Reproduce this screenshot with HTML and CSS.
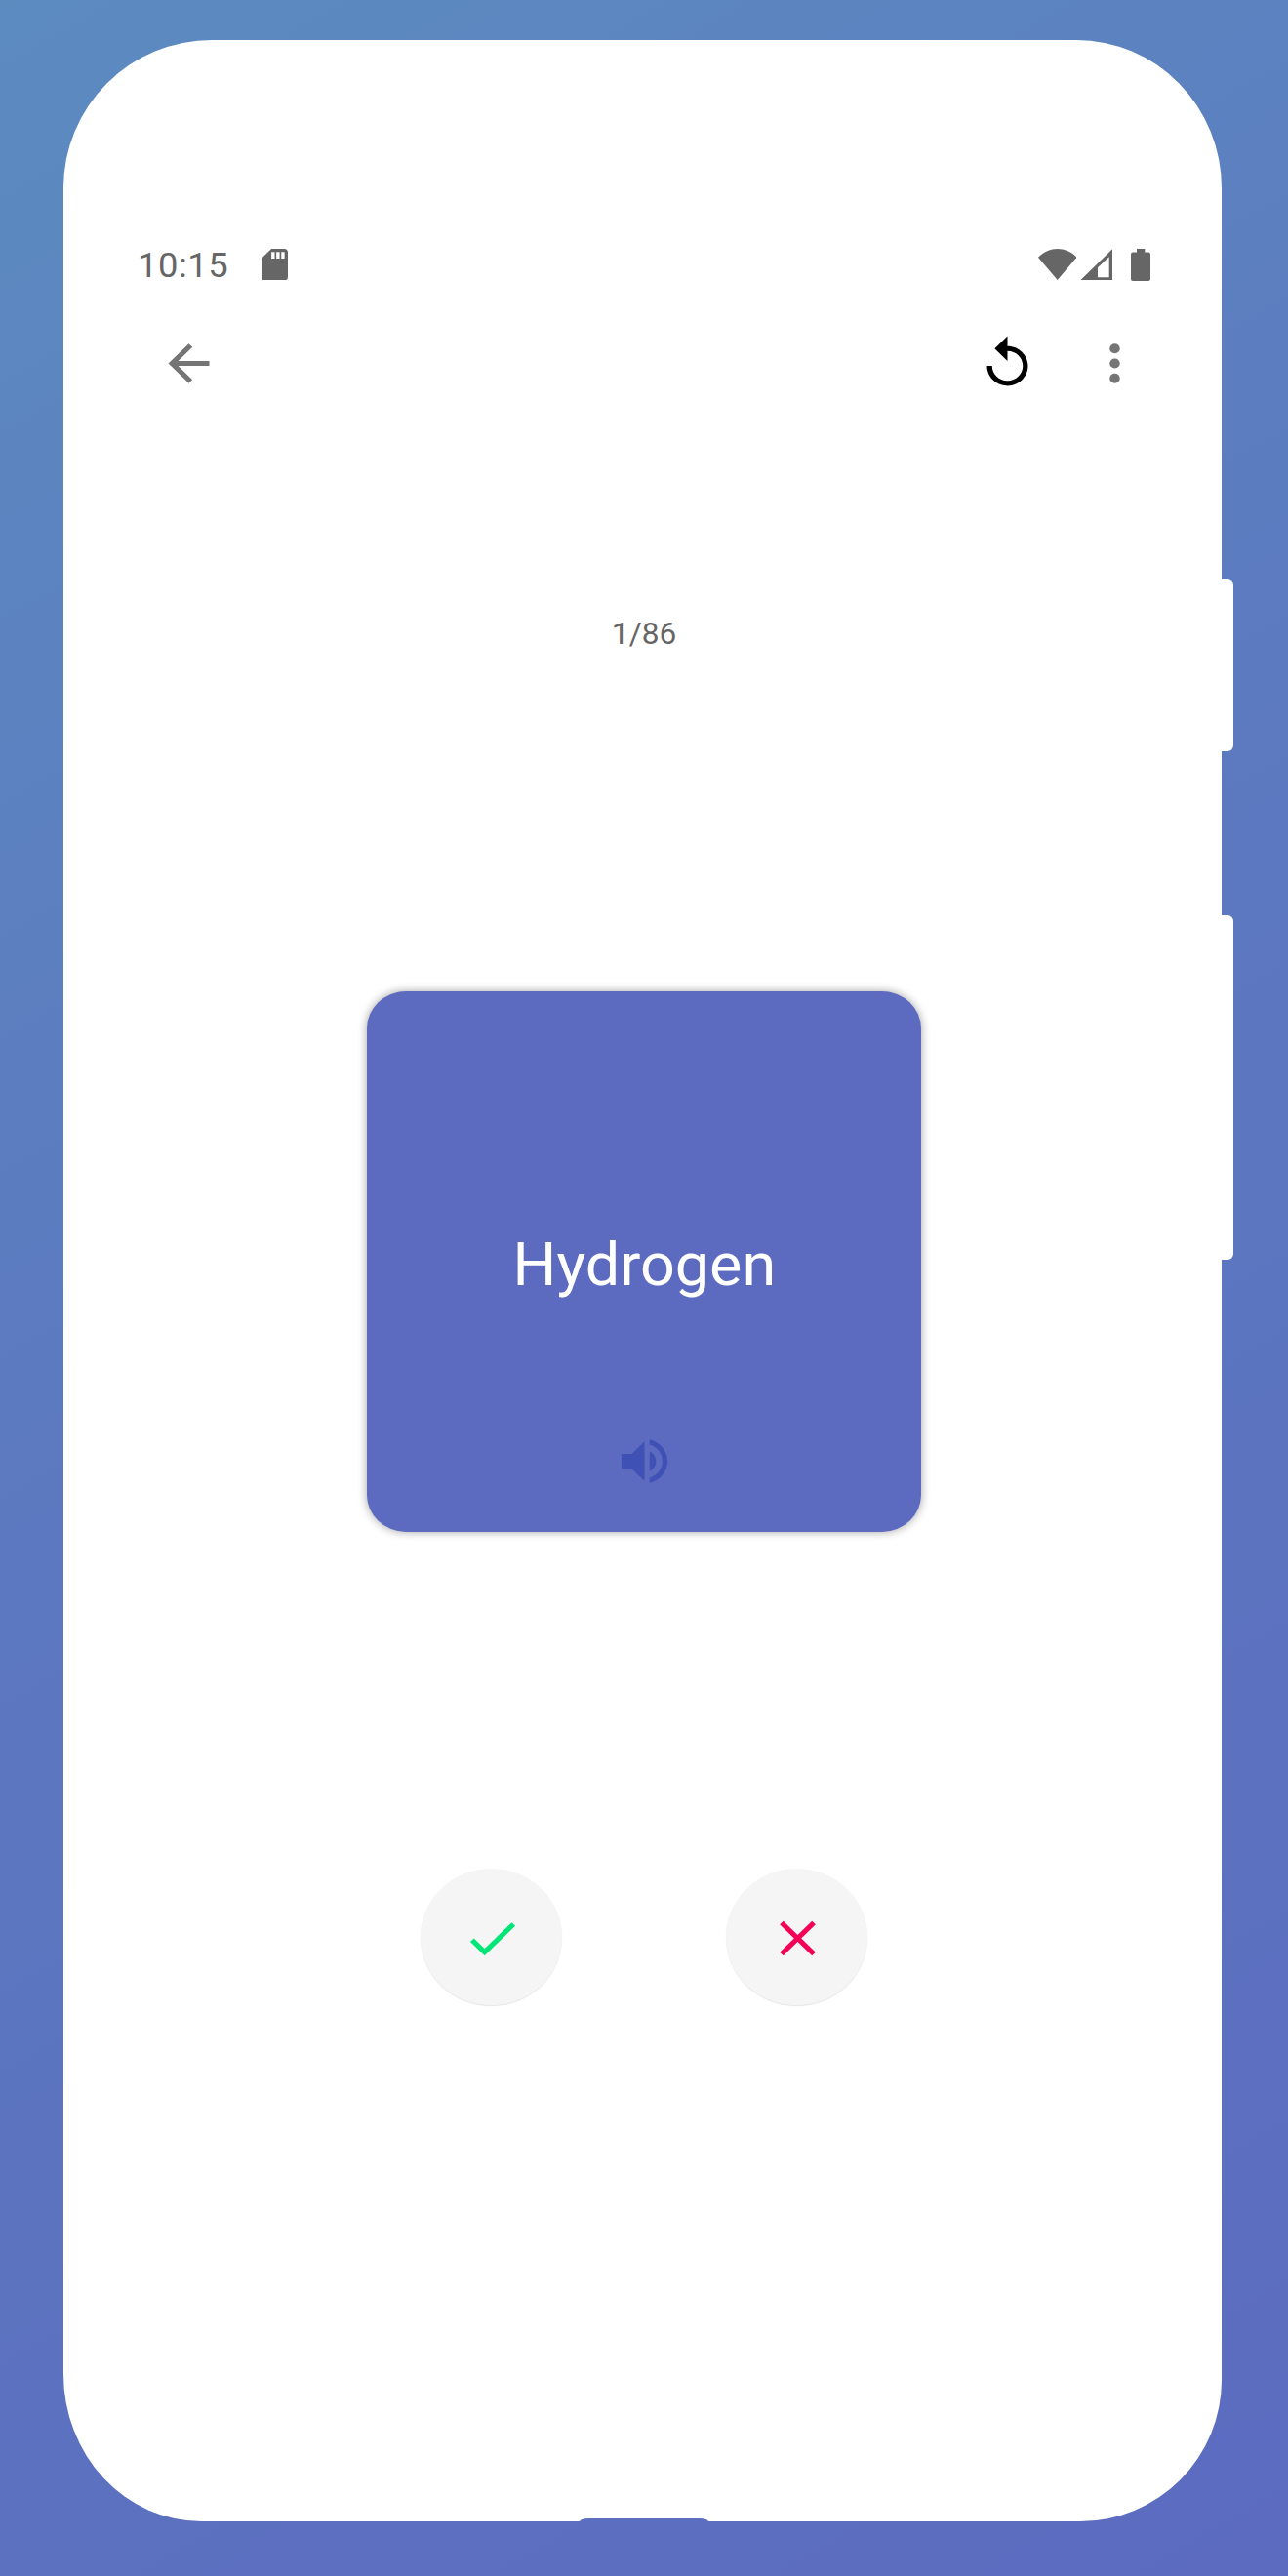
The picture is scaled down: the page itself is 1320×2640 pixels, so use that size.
FILE: index.html
```html
<!DOCTYPE html>
<html lang="en">
<head>
<meta charset="utf-8">
<title>Flashcards</title>
<link rel="stylesheet" href="styles.css">
</head>
<body>
<main class="phone">
  <span class="key key-power"></span>
  <span class="key key-volume"></span>

  <header class="status">
    <span class="clock">10:15</span>
    <svg class="sd" viewBox="4 2 16 20" preserveAspectRatio="none"><path fill-rule="evenodd" d="M18 2h-8L4 8v12c0 1.100.9 2 2 2h12c1.100 0 2-.9 2-2V4c0-1.100-.9-2-2-2zM12 8.200h-2V4h2zm3 0h-2V4h2zm3 0h-2V4h2z"/></svg>
    <span class="spacer"></span>
    <svg class="wifi" viewBox="0 0 39.500 32"><path d="M19.700 32L0 8.700C11-2.900 28.500-2.900 39.500 8.700z"/></svg>
    <svg class="signal" viewBox="0 0 33.300 32.500"><path fill-rule="evenodd" d="M33.300 0v32.500H0zM29.700 8.200L18 19.300V29.300h11.700z"/></svg>
    <svg class="battery" viewBox="0 0 20 33"><path d="M6 0h8.300v3.500H18a2 2 0 0 1 2 2V31a2 2 0 0 1-2 2H2a2 2 0 0 1-2-2V5.500a2 2 0 0 1 2-2h4z"/></svg>
  </header>

  <nav class="toolbar">
    <svg class="icon back" viewBox="0 0 24 24" preserveAspectRatio="none"><path d="M20 11H7.830l5.590-5.590L12 4l-8 8 8 8 1.410-1.410L7.830 13H20z"/></svg>
    <span class="spacer"></span>
    <svg class="icon replay" viewBox="0 0 24 24" preserveAspectRatio="none"><path d="M12 5V1L7 6l5 5V7c3.310 0 6 2.690 6 6s-2.690 6-6 6-6-2.690-6-6H4c0 4.420 3.580 8 8 8s8-3.580 8-8-3.580-8-8-8z"/></svg>
    <svg class="icon more" viewBox="0 0 24 24" preserveAspectRatio="none"><circle cx="12" cy="6" r="2"/><circle cx="12" cy="12" r="2"/><circle cx="12" cy="18" r="2"/></svg>
  </nav>

  <p class="progress">1/86</p>

  <section class="card">
    <h1 class="term">Hydrogen</h1>
    <svg class="icon speaker" viewBox="0 0 24 24" preserveAspectRatio="none"><path d="M3 9v6h4l5 5V4L7 9H3zm13.500 3c0-1.770-1.020-3.290-2.500-4.030v8.050c1.480-.73 2.500-2.250 2.500-4.020zM14 3.230v2.060c2.890.86 5 3.540 5 6.710s-2.110 5.850-5 6.710v2.060c4.010-.91 7-4.490 7-8.770s-2.990-7.860-7-8.770z"/></svg>
  </section>

  <div class="answers">
    <button class="answer right" aria-label="Correct"><svg class="icon" viewBox="0 0 24 24" preserveAspectRatio="none"><path d="M9 16.170L4.830 12l-1.420 1.410L9 19 21 7l-1.410-1.410z"/></svg></button>
    <button class="answer wrong" aria-label="Wrong"><svg class="icon" viewBox="0 0 24 24" preserveAspectRatio="none"><path d="M19 6.410L17.590 5 12 10.590 6.410 5 5 6.410 10.590 12 5 17.590 6.410 19 12 13.410 17.590 19 19 17.590 13.410 12z"/></svg></button>
  </div>
  <span class="chin"></span>
</main>
</body>
</html>
```

FILE: styles.css
```css
* {
  box-sizing: border-box;
}

body {
  margin: 0;
  width: 1320px;
  height: 2640px;
  padding: 41px 68px 56.5px 65px;
  background: linear-gradient(150deg, #5c8bc0 0%, #5c7ac0 42%, #5c6bc0 100%);
  font-family: Roboto, "Liberation Sans", sans-serif;
}

svg {
  display: block;
  flex: none;
}

.phone {
  position: relative;
  display: flex;
  flex-direction: column;
  height: 2542.5px;
  padding-top: 208px;
  background: #fff;
  border-radius: 152px 149px 145px 141px / 152px 152px 145px 151px;
}

.key {
  position: absolute;
  left: 100%;
  width: 12px;
  background: #fff;
  border-radius: 0 6px 6px 0;
}

.key-power {
  top: 552px;
  height: 177px;
}

.key-volume {
  top: 897px;
  height: 353px;
}

.chin {
  position: absolute;
  left: 529px;
  bottom: 0;
  width: 132px;
  height: 3px;
  background: #5c6fc0;
  border-radius: 9px 9px 0 0 / 3px 3px 0 0;
}

.spacer {
  flex: 1;
}

.status {
  display: flex;
  align-items: center;
  height: 44px;
  padding: 0 73px 0 76px;
  fill: #666;
}

.clock {
  width: 127px;
  padding-top: 1px;
  color: #666;
  font-size: 35.500px;
  line-height: 44px;
  letter-spacing: 0.500px;
  transform: scaleX(1.024);
  transform-origin: left;
}

.sd {
  width: 27px;
  height: 32.500px;
}

.wifi {
  width: 39.500px;
  height: 32px;
  margin-right: 3.500px;
}

.signal {
  width: 33.300px;
  height: 32.500px;
  margin-right: 19px;
}

.battery {
  width: 20px;
  height: 33px;
}

.icon {
  width: 63px;
  height: 61px;
}

.toolbar {
  display: flex;
  margin-top: 49.400px;
  padding: 0 78.200px 0 97.200px;
  fill: #757575;
}

.replay {
  margin-right: 47.300px;
  fill: #000;
}

.progress {
  margin: 226.600px 0 0;
  padding-left: 4px;
  color: #666;
  font-size: 31px;
  line-height: 40px;
  text-align: center;
  transform: translateX(-0.5px) scaleX(1.02);
}

.card {
  display: flex;
  flex-direction: column;
  align-items: center;
  width: 568px;
  height: 553.700px;
  margin: 346.500px 0 0 311px;
  padding-top: 240px;
  background: #5c6bc0;
  border-radius: 40px / 38px;
  box-shadow: 0 0 8px 1px rgba(0, 0, 0, 0.3);
}

.term {
  margin: 0;
  color: #fff;
  font-size: 61.500px;
  font-weight: 400;
  line-height: 80px;
  transform: translateX(0.5px) scaleX(1.022);
}

.speaker {
  margin-top: 131px;
  fill: #3f51b5;
}

.answers {
  display: flex;
  gap: 168px;
  margin: 345.300px 0 0 366.300px;
}

.answer {
  display: flex;
  align-items: center;
  justify-content: center;
  width: 144.700px;
  height: 140px;
  padding: 3px 2px 0 4px;
  border: 0;
  border-radius: 50%;
  background: #f5f5f5;
  box-shadow: 0 1px 1px rgba(0, 0, 0, 0.1);
}

.right {
  fill: #00e676;
}

.wrong {
  fill: #f50057;
}
```
